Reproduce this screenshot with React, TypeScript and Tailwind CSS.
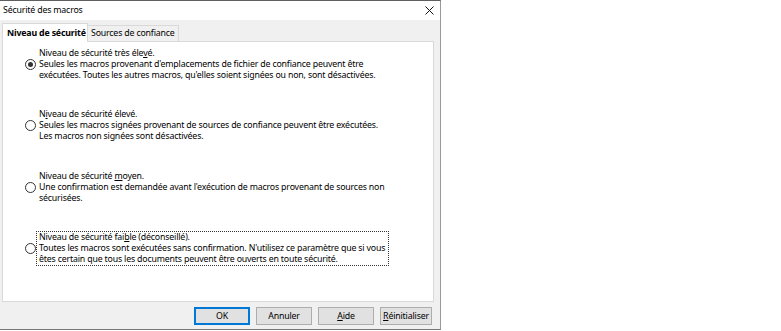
import React from "react";

type Level = {
  title: React.ReactNode;
  lines: string[];
  checked?: boolean;
  focused?: boolean;
};

const LEVELS: Level[] = [
  {
    title: <>Niveau de sécurité très éle<u>v</u>é.</>,
    lines: [
      "Seules les macros provenant d'emplacements de fichier de confiance peuvent être",
      "exécutées. Toutes les autres macros, qu'elles soient signées ou non, sont désactivées.",
    ],
    checked: true,
  },
  {
    title: <>N<u>i</u>veau de sécurité élevé.</>,
    lines: [
      "Seules les macros signées provenant de sources de confiance peuvent être exécutées.",
      "Les macros non signées sont désactivées.",
    ],
  },
  {
    title: <>Niveau de sécurité <u>m</u>oyen.</>,
    lines: [
      "Une confirmation est demandée avant l'exécution de macros provenant de sources non",
      "sécurisées.",
    ],
  },
  {
    title: <>Niveau de sécurité fai<u>b</u>le (déconseillé).</>,
    lines: [
      "Toutes les macros sont exécutées sans confirmation. N'utilisez ce paramètre que si vous",
      "êtes certain que tous les documents peuvent être ouverts en toute sécurité.",
    ],
    focused: true,
  },
];

function Radio({ checked = false }: { checked?: boolean }) {
  return (
    <span className="flex h-[11px] w-[11px] shrink-0 items-center justify-center rounded-full border border-[#333] bg-white">
      {checked ? <span className="h-[5px] w-[5px] rounded-full bg-[#333]" /> : null}
    </span>
  );
}

function Button({ children, primary = false, width }: { children: React.ReactNode; primary?: boolean; width: string }) {
  return (
    <button
      className={
        primary
          ? `${width} flex h-[18px] items-center justify-center border-2 border-[#0078d7] bg-[#e1e1e1]`
          : `${width} flex h-[18px] items-center justify-center border border-[#adadad] bg-[#e1e1e1]`
      }
      type="button"
    >
      {children}
    </button>
  );
}

export default function App() {
  return (
    <div
      className="flex h-[331px] w-[781px] bg-white text-[8.8px] leading-[11px] tracking-[-0.18px] text-black"
      style={{ fontFamily: "'Noto Sans', sans-serif" }}
    >
      <div className="flex h-[330px] w-[441px] flex-col border-t border-r border-b border-t-[#5f5f5f] border-r-[#999] border-b-[#777] bg-[#f0f0f0]">
        <div className="flex h-[19px] shrink-0 items-center justify-between bg-white pl-[3px] pr-[6px]">
          <span>Sécurité des macros</span>
          <svg width="9" height="9" viewBox="0 0 9 9" className="mb-px">
            <path d="M0.5 0.5 L8.5 8.5 M8.5 0.5 L0.5 8.5" stroke="#111" strokeWidth="1" fill="none" />
          </svg>
        </div>

        <div className="flex flex-col pl-[2px] pt-[3px]">
          <div className="flex h-[18px] items-end whitespace-nowrap">
            <div className="relative z-10 -mb-px flex h-[19px] w-[86px] items-center border border-b-0 border-[#d9d9d9] bg-white pl-[4px] font-bold">
              Niveau de sécurité
            </div>
            <div className="flex h-[16px] w-[91px] items-center border border-l-0 border-b-0 border-[#d9d9d9] bg-[#f0f0f0] pl-[3px]">
              Sources de confiance
            </div>
          </div>

          <div className="flex h-[261px] w-[432px] flex-col gap-[26.5px] border border-[#d9d9d9] bg-white pl-[22px] pt-[4.5px]">
            {LEVELS.map((level, i) => (
              <div key={i} className="flex items-center">
                <Radio checked={level.checked} />
                <div
                  className={
                    level.focused
                      ? "border border-dotted border-[#333] pl-[2px] pr-[3px] whitespace-nowrap"
                      : "border border-transparent pl-[2px] pr-[3px] whitespace-nowrap"
                  }
                >
                  <div>{level.title}</div>
                  {level.lines.map((line) => (
                    <div key={line}>{line}</div>
                  ))}
                </div>
              </div>
            ))}
          </div>
        </div>

        <div className="flex justify-end gap-[6px] pr-[8px] pt-[5px]">
          <Button primary width="w-[56px]">OK</Button>
          <Button width="w-[56px]">Annuler</Button>
          <Button width="w-[56px]">
            <u>A</u>ide
          </Button>
          <Button width="w-[52px]">
            <u>R</u>éinitialiser
          </Button>
        </div>
      </div>
    </div>
  );
}
